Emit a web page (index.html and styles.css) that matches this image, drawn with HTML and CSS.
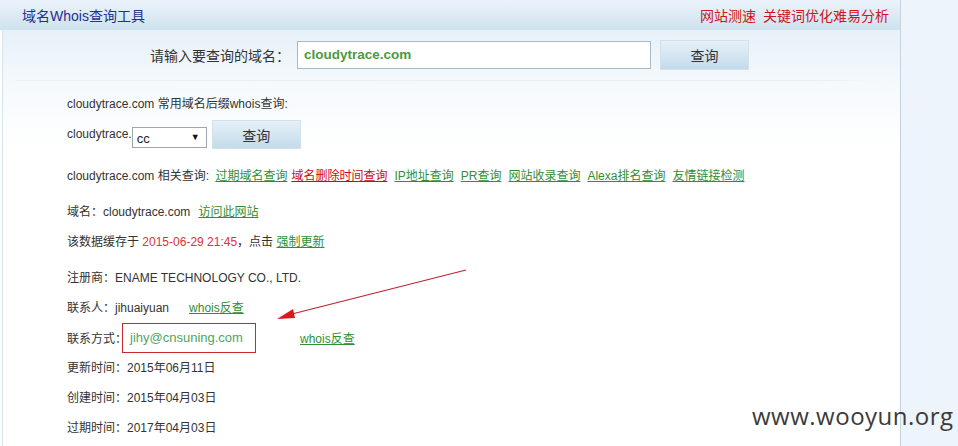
FILE: index.html
```html
<!DOCTYPE html>
<html lang="zh-CN">
<head>
<meta charset="utf-8">
<title>域名Whois查询工具</title>
<link rel="stylesheet" href="styles.css">
</head>
<body>
<div class="page">
  <div class="main">
    <div class="head">
      <span class="title">域名Whois查询工具</span>
      <span class="head-links"><a>网站测速</a><a class="second">关键词优化难易分析</a></span>
    </div>
    <div class="panel">
      <div class="search">
        <span class="search-label">请输入要查询的域名：</span>
        <span class="search-input">cloudytrace.com</span>
        <span class="btn btn-big">查询</span>
      </div>
      <div class="sep"></div>
      <div class="content">
        <div class="row">cloudytrace.com 常用域名后缀whois查询:</div>
        <div class="row">cloudytrace.<span class="select"><span>cc</span><span class="arrow">▼</span></span><span class="btn btn-small">查询</span></div>
        <div class="row row-related">cloudytrace.com 相关查询: <a class="lk first">过期域名查询</a><a class="lk red">域名删除时间查询</a><a class="lk">IP地址查询</a><a class="lk">PR查询</a><a class="lk">网站收录查询</a><a class="lk">Alexa排名查询</a><a class="lk">友情链接检测</a></div>
        <div class="row row-domain">域名：cloudytrace.com<a class="lk visit">访问此网站</a></div>
        <div class="row">该数据缓存于 <span class="date">2015-06-29 21:45</span>，点击 <a class="lk plain">强制更新</a></div>
        <div class="row row-reg">注册商：ENAME TECHNOLOGY CO., LTD.</div>
        <div class="row">联系人：jihuaiyuan<a class="lk rev1">whois反查</a></div>
        <div class="row">联系方式：<span class="email-box">jihy@cnsuning.com</span><a class="lk rev2">whois反查</a></div>
        <div class="row">更新时间：2015年06月11日</div>
        <div class="row">创建时间：2015年04月03日</div>
        <div class="row">过期时间：2017年04月03日</div>
      </div>
    </div>
  </div>
  <div class="side"></div>
  <svg class="arrow-mark" width="958" height="446" viewBox="0 0 958 446">
    <line x1="466" y1="270" x2="288" y2="315" stroke="#b8262e" stroke-width="1.2"/>
    <polygon points="277,319 293,309 295,318" fill="#e0161c"/>
  </svg>
  <div class="watermark">www.wooyun.org</div>
</div>
</body>
</html>
```
FILE: styles.css
```css
html, body {
  margin: 0;
  padding: 0;
  background: #ffffff;
}
.page {
  position: relative;
  display: flex;
  width: 958px;
  height: 446px;
  overflow: hidden;
  font-family: "Liberation Sans", "Noto Sans CJK SC", sans-serif;
  font-size: 12px;
  color: #333;
}
.main {
  width: 900px;
  border-right: 1px solid #c4d3de;
  display: flex;
  flex-direction: column;
}
.side {
  flex: 1;
  background: #eef4fb;
}
.head {
  height: 30px;
  display: flex;
  align-items: center;
  justify-content: space-between;
  padding: 0 11px 0 22px;
  background: linear-gradient(#ebf3fa, #cfe2ef);
}
.title {
  font-size: 14px;
  color: #24308f;
}
.head-links {
  font-size: 14px;
  color: #cf1420;
}
.head-links .second {
  margin-left: 7px;
}
.panel {
  flex: 1;
  margin-left: 2px;
  border-left: 1px solid #d6e4ef;
  background: linear-gradient(#e7f1f9 0px, #f6fafd 60px, #ffffff 120px);
}
.search {
  display: flex;
  align-items: center;
  justify-content: center;
  padding-top: 10px;
  padding-right: 4px;
  height: 30px;
}
.search-label {
  font-size: 14px;
  color: #333;
  margin-right: 7px;
}
.search-input {
  box-sizing: border-box;
  width: 354px;
  height: 28px;
  border: 1px solid #a9b9c6;
  background: #fff;
  padding-left: 6px;
  line-height: 26px;
  font-size: 13.5px;
  font-weight: bold;
  color: #4c9a3c;
  margin-right: 9px;
}
.btn {
  box-sizing: border-box;
  display: inline-flex;
  align-items: center;
  justify-content: center;
  background: linear-gradient(#e6f0f8, #c3dbea);
  border: 1px solid #d3e1eb;
  color: #333;
  line-height: normal;
}
.btn-big {
  width: 89px;
  height: 30px;
  font-size: 14px;
}
.btn-small {
  width: 89px;
  height: 29px;
  font-size: 14px;
  margin-left: 5px;
  vertical-align: middle;
}
.sep {
  height: 1px;
  margin: 10px 13px 0 13px;
  background: linear-gradient(90deg, #eef2f5, #e6ecf0 90%, #f8fafb);
}
.content {
  padding: 8px 0 0 64px;
}
.row {
  height: 30px;
  line-height: 30px;
  white-space: nowrap;
}
.row-related { margin-top: 12px; }
.row-domain { margin-top: 6px; }
.row-reg { margin-top: 6px; }
.select {
  box-sizing: border-box;
  width: 75px;
  height: 21px;
  border: 1px solid #a0a6ab;
  background: #fff;
  display: inline-flex;
  align-items: center;
  justify-content: space-between;
  padding: 2px 6px 0 4px;
  font-size: 13px;
  line-height: normal;
  color: #222;
  vertical-align: middle;
  margin-top: 5px;
}
.select .arrow {
  font-size: 9px;
  color: #111;
  margin-top: -2px;
}
.lk {
  color: #2f8f34;
  text-decoration: underline;
  margin-right: 7px;
}
.lk.first { margin-left: 3px; margin-right: 4px; }
.lk.red { color: #cc0a14; }
.lk.visit { margin-left: 8px; }
.lk.rev1 { margin-left: 20px; }
.lk.rev2 { margin-left: 44px; }
.date { color: #e03038; }
.email-box {
  box-sizing: border-box;
  display: inline-block;
  width: 134px;
  height: 30px;
  line-height: 28px;
  border: 1px solid #c8282e;
  padding-left: 7px;
  font-size: 13px;
  color: #4fa55f;
  margin-left: -5px;
  margin-bottom: 4px;
  vertical-align: middle;
}
.arrow-mark {
  position: absolute;
  left: 0;
  top: 0;
  pointer-events: none;
}
.watermark {
  position: absolute;
  left: 752px;
  top: 399px;
  font-family: "Open Sans", sans-serif;
  font-size: 24px;
  letter-spacing: 0.5px;
  color: #3b3b3b;
}
```
